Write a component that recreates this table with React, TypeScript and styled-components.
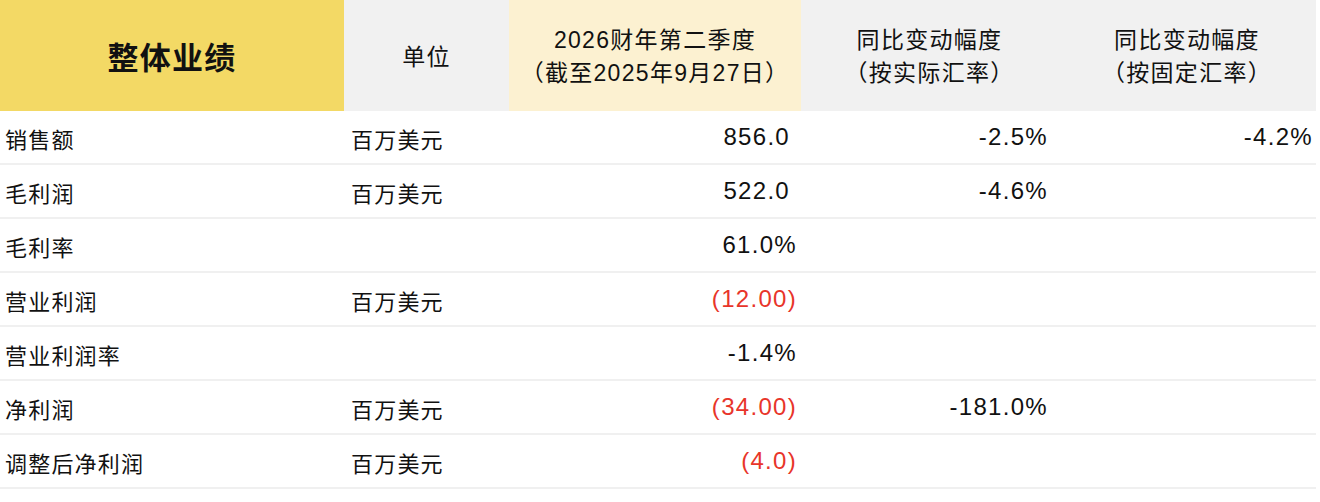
import { FC } from "react";
import styled, { createGlobalStyle } from "styled-components";

interface RowData {
  name: string;
  unit?: string;
  value: string;
  negative?: boolean;
  percent?: boolean;
  yoy?: string;
  yoyFixed?: string;
}

const rows: RowData[] = [
  { name: "销售额", unit: "百万美元", value: "856.0", yoy: "-2.5%", yoyFixed: "-4.2%" },
  { name: "毛利润", unit: "百万美元", value: "522.0", yoy: "-4.6%" },
  { name: "毛利率", value: "61.0%", percent: true },
  { name: "营业利润", unit: "百万美元", value: "(12.00)", negative: true },
  { name: "营业利润率", value: "-1.4%", percent: true },
  { name: "净利润", unit: "百万美元", value: "(34.00)", negative: true, yoy: "-181.0%" },
  { name: "调整后净利润", unit: "百万美元", value: "(4.0)", negative: true },
];

const GlobalStyle = createGlobalStyle`
  body {
    margin: 0;
    background: #ffffff;
    font-family: "Liberation Sans", "Noto Sans CJK SC", sans-serif;
    color: #111111;
  }
`;

const Table = styled.div`
  width: 1316px;
`;

const Grid = styled.div`
  display: grid;
  grid-template-columns: 344px 165px 292px 257px 258px;
`;

const HeaderRow = styled(Grid)`
  height: 111px;
`;

const HeadCell = styled.div<{ $bg: string }>`
  background: ${(p) => p.$bg};
  display: flex;
  flex-direction: column;
  align-items: center;
  justify-content: center;
  font-size: 23px;
  line-height: 33px;
  letter-spacing: 1.3px;
  padding-top: 3px;
`;

const Title = styled.div`
  font-size: 31px;
  font-weight: 700;
  letter-spacing: 1.2px;
  padding-top: 3px;
`;

const BodyRow = styled(Grid)`
  height: 52px;
  border-bottom: 2px solid #f0f0f0;
  align-items: center;
  font-size: 22px;
  letter-spacing: 1.2px;
`;

const NameCell = styled.div`
  padding-left: 5px;
  padding-top: 2px;
`;

const UnitCell = styled.div`
  padding-left: 7px;
  padding-top: 2px;
`;

const NumCell = styled.div<{ $pad: number; $red?: boolean }>`
  text-align: right;
  padding-right: ${(p) => p.$pad}px;
  font-size: 24px;
  letter-spacing: 1.3px;
  color: ${(p) => (p.$red ? "#e8352a" : "#111111")};
`;

const Row: FC<{ data: RowData }> = ({ data }) => {
  const tight = data.negative || data.percent;
  return (
    <BodyRow>
      <NameCell>{data.name}</NameCell>
      <UnitCell>{data.unit}</UnitCell>
      <NumCell $pad={tight ? 4 : 11} $red={data.negative}>
        {data.value}
      </NumCell>
      <NumCell $pad={10}>{data.yoy}</NumCell>
      <NumCell $pad={3}>{data.yoyFixed}</NumCell>
    </BodyRow>
  );
};

const App: FC = () => (
  <>
    <GlobalStyle />
    <Table>
      <HeaderRow>
        <HeadCell $bg="#f3d965">
          <Title>整体业绩</Title>
        </HeadCell>
        <HeadCell $bg="#f1f1f1">单位</HeadCell>
        <HeadCell $bg="#fcf1d1">
          <div>2026财年第二季度</div>
          <div>（截至2025年9月27日）</div>
        </HeadCell>
        <HeadCell $bg="#f1f1f1">
          <div>同比变动幅度</div>
          <div>（按实际汇率）</div>
        </HeadCell>
        <HeadCell $bg="#f1f1f1">
          <div>同比变动幅度</div>
          <div>（按固定汇率）</div>
        </HeadCell>
      </HeaderRow>
      {rows.map((r) => (
        <Row key={r.name} data={r} />
      ))}
    </Table>
  </>
);

export default App;
